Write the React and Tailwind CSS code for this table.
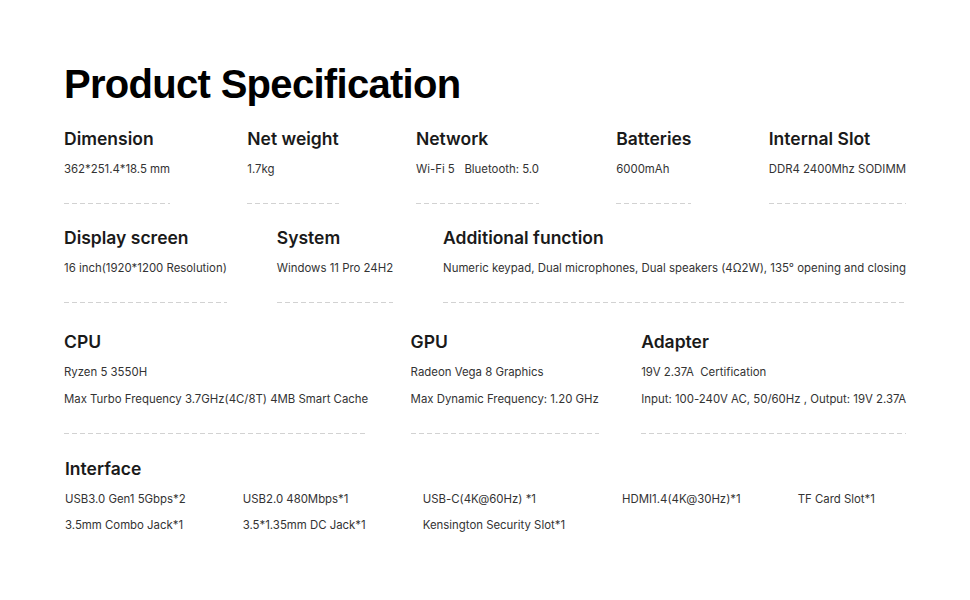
import React from 'react'

const rows = [
  {
    mt: 'mt-[19px]',
    items: [
      { title: 'Dimension', values: ['362*251.4*18.5 mm'] },
      { title: 'Net weight', values: ['1.7kg'] },
      { title: 'Network', values: ['Wi-Fi 5\u00a0\u00a0\u00a0Bluetooth: 5.0'] },
      { title: 'Batteries', values: ['6000mAh'] },
      { title: 'Internal Slot', values: ['DDR4 2400Mhz SODIMM'] },
    ],
  },
  {
    mt: 'mt-[22px]',
    items: [
      { title: 'Display screen', values: ['16 inch(1920*1200 Resolution)'] },
      { title: 'System', values: ['Windows 11 Pro 24H2'] },
      {
        title: 'Additional function',
        values: ['Numeric keypad, Dual microphones, Dual speakers (4Ω2W), 135° opening and closing'],
      },
    ],
  },
  {
    mt: 'mt-[27px]',
    items: [
      {
        title: 'CPU',
        values: ['Ryzen 5 3550H', 'Max Turbo Frequency 3.7GHz(4C/8T) 4MB Smart Cache'],
      },
      {
        title: 'GPU',
        values: ['Radeon Vega 8 Graphics', 'Max Dynamic Frequency: 1.20 GHz'],
      },
      {
        title: 'Adapter',
        values: ['19V 2.37A\u00a0\u00a0Certification', 'Input: 100-240V AC, 50/60Hz , Output: 19V 2.37A'],
      },
    ],
  },
]

const ports = [
  ['USB3.0 Gen1 5Gbps*2', '3.5mm Combo Jack*1'],
  ['USB2.0 480Mbps*1', '3.5*1.35mm DC Jack*1'],
  ['USB-C(4K@60Hz) *1', 'Kensington Security Slot*1'],
  ['HDMI1.4(4K@30Hz)*1'],
  ['TF Card Slot*1'],
]

const SpecItem = ({ title, values }) => (
  <div className="flex flex-col">
    <h3 className="text-[17.5px] leading-[24px] font-semibold text-[#1a1a1a]">{title}</h3>
    <div className="mt-[8px] flex flex-col gap-[7px]">
      {values.map((v) => (
        <p key={v} className="text-[11.4px] leading-[20px] text-[#333] whitespace-nowrap">{v}</p>
      ))}
    </div>
    {/* dashed rule */}
    <div className="mt-[24px] h-px w-full bg-[repeating-linear-gradient(90deg,#d2d2d2_0_5px,transparent_5px_8px)]" />
  </div>
)

export default function App() {
  return (
    <div className="w-[970px] h-[600px] bg-white px-[64px] pt-[60px] font-['Inter',sans-serif] [font-feature-settings:'calt'_0]">
      <h1 className="font-['Liberation_Sans',Arial,sans-serif] font-bold text-[40px] leading-[48px] tracking-[-0.7px] text-black">
        Product Specification
      </h1>

      {rows.map((row, i) => (
        <div key={i} className={`${row.mt} flex justify-between`}>
          {row.items.map((item) => (
            <SpecItem key={item.title} {...item} />
          ))}
        </div>
      ))}

      {/* Interface */}
      <div className="mt-[23px] pl-px">
        <h3 className="text-[17.5px] leading-[24px] font-semibold text-[#1a1a1a]">Interface</h3>
        <div className="mt-[8px] flex gap-[57px]">
          {ports.map((col, i) => (
            <div key={i} className="flex flex-col gap-[6px]">
              {col.map((p) => (
                <p key={p} className="text-[11.4px] leading-[20px] text-[#333] whitespace-nowrap">{p}</p>
              ))}
            </div>
          ))}
        </div>
      </div>
    </div>
  )
}
